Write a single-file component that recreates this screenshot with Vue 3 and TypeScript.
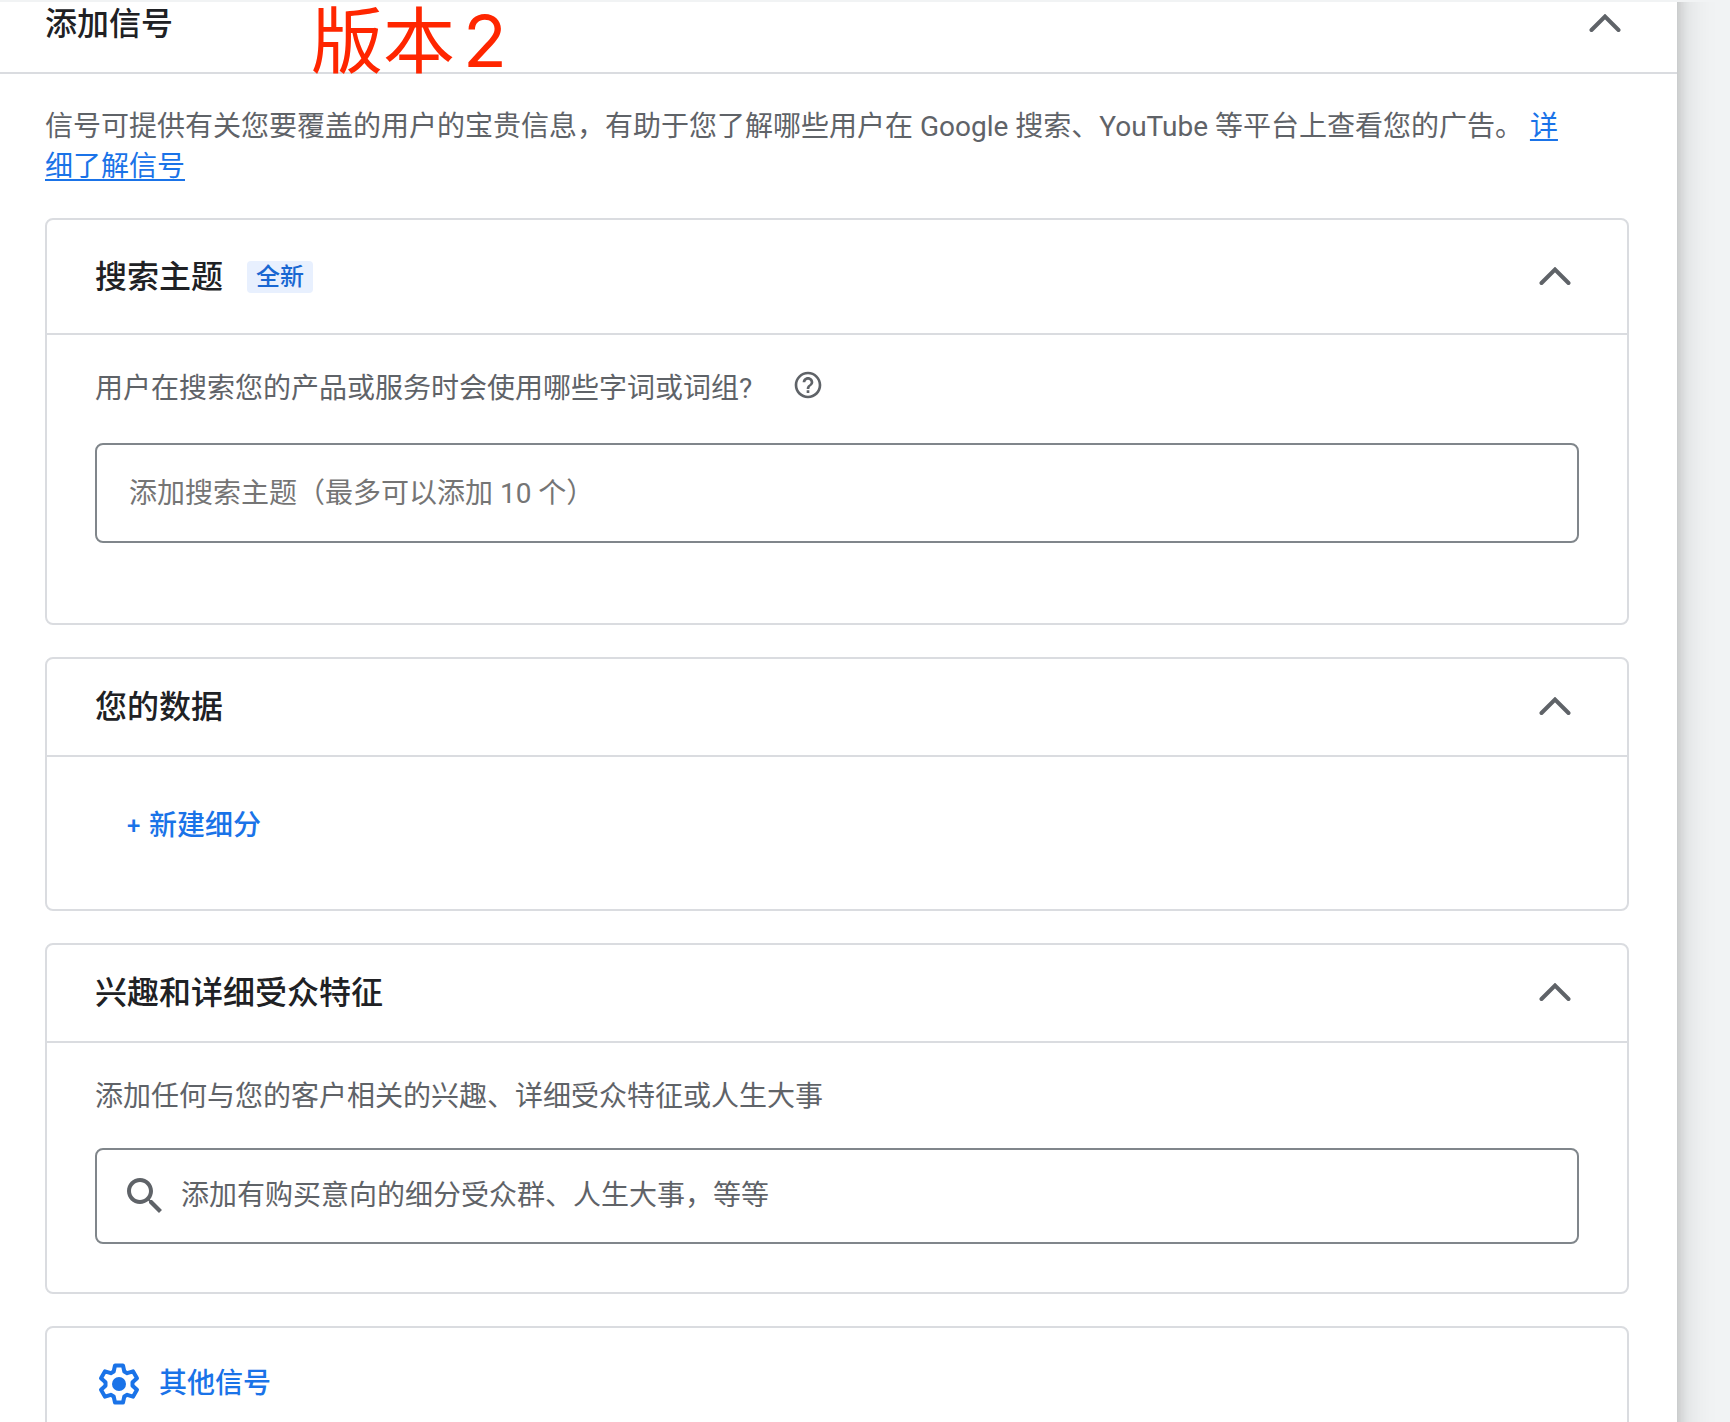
<script setup lang="ts">
import { reactive, ref } from 'vue'

type Section = 'signals' | 'themes' | 'data' | 'interests'

const open = reactive<Record<Section, boolean>>({
  signals: true,
  themes: true,
  data: true,
  interests: true,
})
const theme = ref('')
const interest = ref('')

function toggle(section: Section) {
  open[section] = !open[section]
}
</script>

<template>
  <div class="page">
    <main class="panel">
      <header class="panel-head">
        <h1 class="title">添加信号</h1>
        <span class="version">版本<span class="version-number">2</span></span>
        <button class="toggle" type="button" aria-label="收起添加信号" :aria-expanded="open.signals" @click="toggle('signals')">
          <svg class="chevron" :class="{ closed: !open.signals }" viewBox="0 0 32 20"><path d="M2.5 16L16 2.5 29.5 16" /></svg>
        </button>
      </header>

      <div v-if="open.signals" class="panel-body">
        <p class="intro">
          信号可提供有关您要覆盖的用户的宝贵信息，有助于您了解哪些用户在 Google 搜索、YouTube 等平台上查看您的广告。
          <a href="#">详细了解信号</a>
        </p>

        <section class="card">
          <header class="card-head tall">
            <h2 class="title">搜索主题</h2>
            <span class="badge">全新</span>
            <button class="toggle" type="button" aria-label="收起搜索主题" :aria-expanded="open.themes" @click="toggle('themes')">
              <svg class="chevron" :class="{ closed: !open.themes }" viewBox="0 0 32 20"><path d="M2.5 16L16 2.5 29.5 16" /></svg>
            </button>
          </header>
          <div v-if="open.themes" class="card-body themes">
            <div class="question">
              <label for="theme">用户在搜索您的产品或服务时会使用哪些字词或词组?</label>
              <button class="help" type="button" aria-label="帮助">
                <svg viewBox="0 0 24 24"><path d="M11 18h2v-2h-2v2zm1-16C6.48 2 2 6.48 2 12s4.48 10 10 10 10-4.48 10-10S17.52 2 12 2zm0 18c-4.41 0-8-3.59-8-8s3.59-8 8-8 8 3.59 8 8-3.59 8-8 8zm0-14c-2.21 0-4 1.79-4 4h2c0-1.1.9-2 2-2s2 .9 2 2c0 2-3 1.75-3 5h2c0-2.25 3-2.5 3-5 0-2.21-1.79-4-4-4z" /></svg>
              </button>
            </div>
            <input id="theme" v-model="theme" class="field theme-field" type="text" placeholder="添加搜索主题（最多可以添加 10 个）" />
          </div>
        </section>

        <section class="card">
          <header class="card-head">
            <h2 class="title">您的数据</h2>
            <button class="toggle" type="button" aria-label="收起您的数据" :aria-expanded="open.data" @click="toggle('data')">
              <svg class="chevron" :class="{ closed: !open.data }" viewBox="0 0 32 20"><path d="M2.5 16L16 2.5 29.5 16" /></svg>
            </button>
          </header>
          <div v-if="open.data" class="card-body data">
            <button class="action" type="button"><span class="plus">+</span>新建细分</button>
          </div>
        </section>

        <section class="card">
          <header class="card-head">
            <h2 class="title">兴趣和详细受众特征</h2>
            <button class="toggle" type="button" aria-label="收起兴趣和详细受众特征" :aria-expanded="open.interests" @click="toggle('interests')">
              <svg class="chevron" :class="{ closed: !open.interests }" viewBox="0 0 32 20"><path d="M2.5 16L16 2.5 29.5 16" /></svg>
            </button>
          </header>
          <div v-if="open.interests" class="card-body interests">
            <label for="interest">添加任何与您的客户相关的兴趣、详细受众特征或人生大事</label>
            <div class="field search-field">
              <svg viewBox="0 0 24 24"><path d="M15.5 14h-.79l-.28-.27C15.41 12.59 16 11.11 16 9.5 16 5.91 13.09 3 9.5 3S3 5.91 3 9.5 5.91 16 9.5 16c1.61 0 3.09-.59 4.23-1.57l.27.28v.79l5 4.99L20.49 19l-4.99-5zm-6 0C7.01 14 5 11.99 5 9.5S7.01 5 9.5 5 14 7.01 14 9.5 11.99 14 9.5 14z" /></svg>
              <input id="interest" v-model="interest" type="text" placeholder="添加有购买意向的细分受众群、人生大事，等等" />
            </div>
          </div>
        </section>

        <section class="card other">
          <button class="action" type="button">
            <svg class="gear" viewBox="0 0 48 48">
              <path d="M20 5.5L28 5.5 29.3 11.5 32.2 13.2 38 11.3 42 18.2 37.5 22.3 37.5 25.7 42 29.8 38 36.7 32.2 34.8 29.3 36.5 28 42.5 20 42.5 18.7 36.5 15.8 34.8 10 36.7 6 29.8 10.5 25.7 10.5 22.3 6 18.2 10 11.3 15.8 13.2 18.7 11.5z" />
              <circle cx="24" cy="24" r="7" />
            </svg>
            其他信号
          </button>
        </section>
      </div>
    </main>
  </div>
</template>

<style>
body {
  margin: 0;
  background: #f1f3f4;
}
</style>

<style scoped>
.page {
  box-sizing: border-box;
  height: 100vh;
  overflow: hidden;
  border-top: 2px solid #f1f3f4;
  background: #f1f3f4;
  color: #5f6368;
  font-family: Roboto, "Noto Sans CJK SC", sans-serif;
  font-size: 28px;
  line-height: 40px;
}
.panel {
  margin-right: 53px;
  background: #fff;
  box-shadow: 0 -36px 12px rgba(0, 0, 0, 0.16), 0 -36px 36px rgba(0, 0, 0, 0.18);
}
.panel-head {
  position: relative;
  display: flex;
  align-items: center;
  padding: 2px 56px 28px 45px;
  border-bottom: 2px solid #dadce0;
}
.title {
  margin: 0;
  color: #202124;
  font-size: 32px;
  font-weight: 500;
  line-height: 40px;
}
.version {
  position: absolute;
  top: -1px;
  left: 311px;
  color: #ff2600;
  font-family: Inter, "Noto Sans CJK SC", sans-serif;
  font-size: 72px;
  line-height: 80px;
}
.version-number {
  margin-left: 8px;
}
button {
  padding: 0;
  border: 0;
  background: none;
  font: inherit;
  cursor: pointer;
}
.toggle {
  display: flex;
  align-items: center;
  height: 40px;
  margin-left: auto;
}
.chevron {
  width: 32px;
  height: 20px;
  fill: none;
  stroke: #5f6368;
  stroke-width: 4;
  stroke-linecap: round;
}
.chevron.closed {
  transform: rotate(180deg);
}
.panel-body {
  padding: 33px 48px 48px 45px;
}
.intro {
  margin: 0 44px 31px 0;
}
a {
  color: #1a73e8;
  text-underline-offset: 3px;
}
.card {
  margin-bottom: 32px;
  border: 2px solid #dadce0;
  border-radius: 8px;
}
.card-head {
  display: flex;
  align-items: center;
  padding: 28px 56px 28px 48px;
  border-bottom: 2px solid #dadce0;
}
.card-head.tall {
  padding-top: 37px;
  padding-bottom: 36px;
}
.badge {
  margin-left: 24px;
  padding: 0 9px;
  border-radius: 4px;
  background: #e8f0fe;
  color: #1967d2;
  font-size: 24px;
  font-weight: 500;
  line-height: 32px;
}
.card-body {
  display: flex;
  flex-direction: column;
  padding: 34px 48px;
}
.themes {
  gap: 34px;
  padding-bottom: 80px;
}
.question {
  display: flex;
  align-items: flex-start;
  gap: 40px;
}
.help {
  display: flex;
}
.help svg {
  width: 32px;
  height: 32px;
  fill: #5f6368;
}
.field {
  box-sizing: border-box;
  width: 100%;
  border: 2px solid #80868b;
  border-radius: 8px;
  background: #fff;
}
input {
  color: #202124;
  font: inherit;
}
.theme-field {
  height: 100px;
  padding: 0 32px;
}
.theme-field::placeholder {
  color: #757575;
}
.data {
  align-items: flex-start;
  padding: 49px 80px 63px;
}
.action {
  display: flex;
  align-items: center;
  color: #1a73e8;
  font-weight: 500;
}
.plus {
  width: 22px;
  font-size: 24px;
  text-align: left;
}
.interests {
  gap: 31px;
  padding-bottom: 48px;
}
.search-field {
  display: flex;
  align-items: center;
  gap: 12px;
  height: 96px;
  padding: 0 24px;
}
.search-field svg {
  width: 48px;
  height: 48px;
  fill: #5f6368;
}
.search-field input {
  flex: 1;
  padding: 0;
  border: 0;
  outline: 0;
  background: none;
}
.search-field input::placeholder {
  color: #5f6368;
}
.other {
  padding: 32px 48px;
}
.other .action {
  gap: 16px;
}
.gear {
  width: 48px;
  height: 48px;
}
.gear path {
  fill: none;
  stroke: #1a73e8;
  stroke-width: 4;
  stroke-linejoin: round;
}
.gear circle {
  fill: #1a73e8;
}
</style>
